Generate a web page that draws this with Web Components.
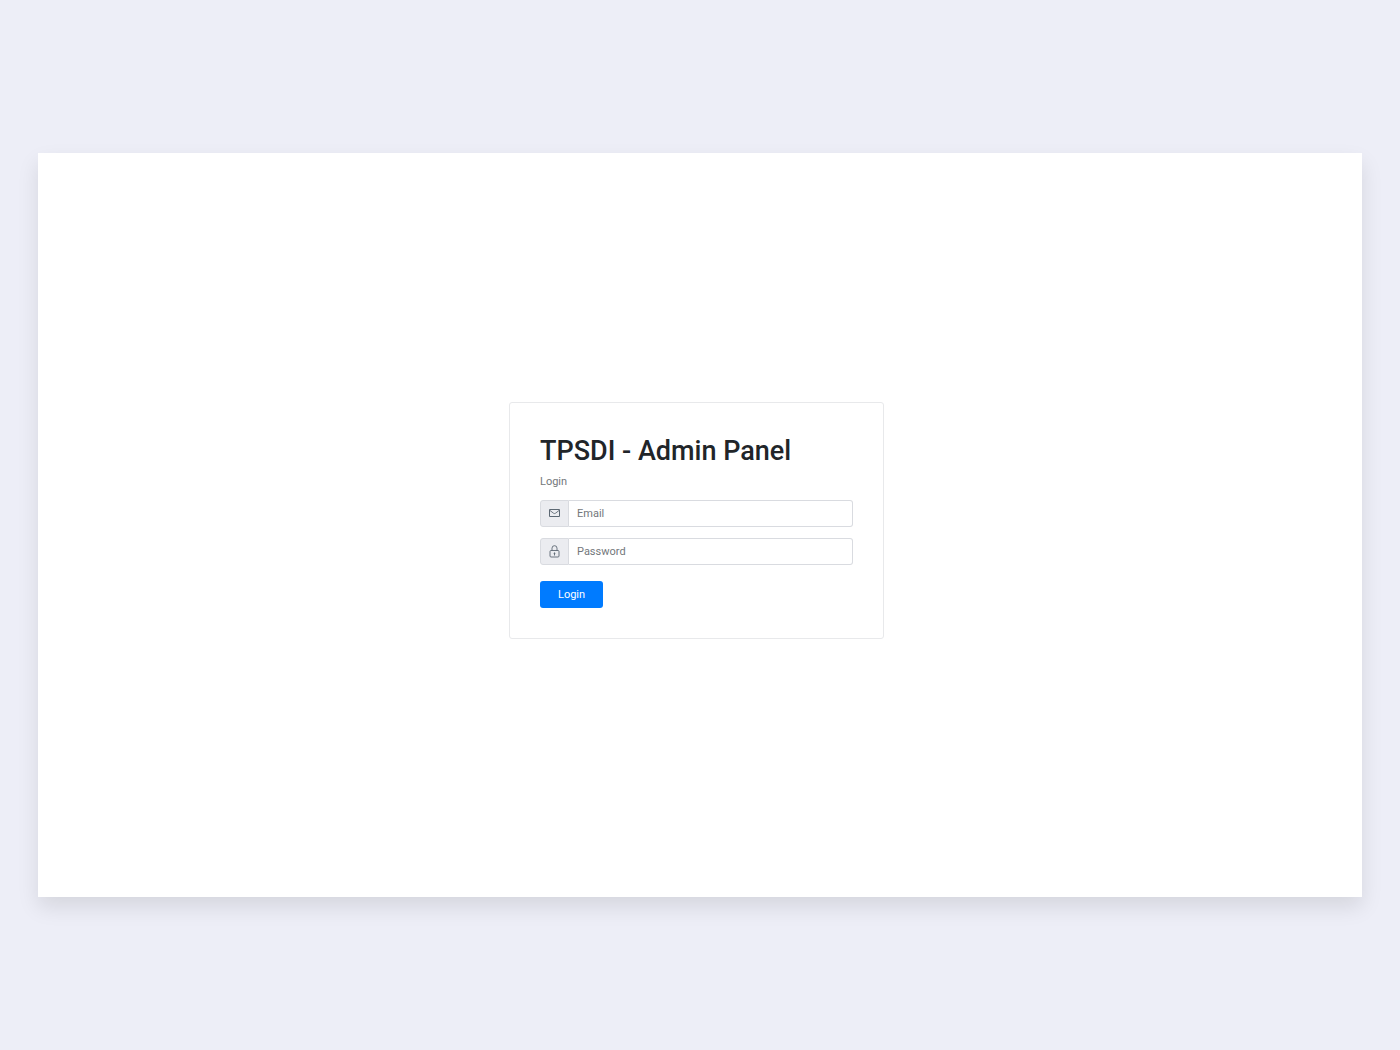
<!DOCTYPE html>
<html lang="en">
<head>
<meta charset="utf-8">
<meta name="viewport" content="width=device-width, initial-scale=1">
<title>TPSDI - Admin Panel</title>
<style>
  html, body { height: 100%; }
  body { margin: 0; background: #edeef7; font-family: Roboto, "Liberation Sans", sans-serif; font-size: 11px; line-height: 17px; color: #212529; }
</style>
</head>
<body>
<app-stage>
  <login-card heading="TPSDI - Admin Panel" subtitle="Login">
    <icon-field type="email" label="Email">
      <svg slot="icon" width="13" height="13" viewBox="0 0 13 13" fill="none" stroke="currentColor" aria-hidden="true"><path d="M1.500 2.500h10v7h-10z"/><path d="M2 3.500l3.500 2.700q1 .7 2 0L11 3.500" stroke-width=".9"/></svg>
    </icon-field>
    <icon-field type="password" label="Password">
      <svg slot="icon" width="13" height="13" viewBox="0 0 13 13" fill="none" stroke="currentColor" stroke-width=".9" aria-hidden="true"><rect x="2" y="5.500" width="9" height="6.500" rx="1"/><path d="M4 5.500V3.200a2.500 2.500 0 0 1 5 0v2.300M6.500 8.500v2"/><circle cx="6.500" cy="8.300" r=".5" fill="currentColor"/></svg>
    </icon-field>
    <primary-button slot="action">Login</primary-button>
  </login-card>
</app-stage>
<script>
const define = (name, markup, setup) => customElements.define(name, class extends HTMLElement {
  constructor() {
    super();
    this.attachShadow({ mode: 'open' }).innerHTML = markup;
  }
  connectedCallback() { if (setup) setup(this, this.shadowRoot); }
});

define('app-stage', `
  <style>
    :host { display: flex; box-sizing: border-box; min-height: 100vh; padding: 0 38px; align-items: center; }
    main { flex: 1; display: flex; box-sizing: border-box; aspect-ratio: 16 / 9; padding: 0 7px 10px 0; align-items: center; justify-content: center; background: #fff; box-shadow: 0 10px 20px rgba(0, 0, 0, .1); }
  </style>
  <main><slot></slot></main>`);

define('login-card', `
  <style>
    :host { display: block; box-sizing: border-box; width: 375px; max-width: 100%; padding: 30px; border: 1px solid #e8e9eb; border-radius: 3px; }
    h1 { margin: 0 0 4px; font-size: 27px; line-height: 36px; font-weight: 500; white-space: nowrap; }
    p { margin: 0 0 10px; color: #73777b; }
    .fields { display: flex; flex-direction: column; gap: 11px; margin-bottom: 16px; }
  </style>
  <form>
    <h1></h1>
    <p></p>
    <div class="fields"><slot></slot></div>
    <slot name="action"></slot>
  </form>`, (el, root) => {
  root.querySelector('h1').textContent = el.getAttribute('heading');
  root.querySelector('p').textContent = el.getAttribute('subtitle');
});

define('icon-field', `
  <style>
    :host { display: flex; height: 27px; }
    label { display: flex; box-sizing: border-box; width: 29px; align-items: center; justify-content: center; color: #5c6873; background: #ebecf0; border: 1px solid #d9dbe0; border-radius: 3px 0 0 3px; }
    input { flex: 1; min-width: 0; box-sizing: border-box; margin: 0; padding: 0 8px; border: 1px solid #d9dbe0; border-left: 0; border-radius: 0 3px 3px 0; background: #fff; color: #495057; font: inherit; outline: 0; }
    input::placeholder { color: #73777b; opacity: 1; }
    input:focus { border-color: #80bdff; }
  </style>
  <label for="control"><slot name="icon"></slot></label>
  <input id="control">`, (el, root) => {
  const input = root.querySelector('input');
  input.type = el.getAttribute('type');
  input.placeholder = el.getAttribute('label');
  input.setAttribute('aria-label', el.getAttribute('label'));
});

define('primary-button', `
  <style>
    :host { display: flex; }
    button { height: 27px; margin: 0; padding: 0 18px; border: 0; border-radius: 3px; background: #007bff; color: #fff; font: inherit; cursor: pointer; }
    button:hover { background: #0069d9; }
  </style>
  <button type="button"><slot></slot></button>`);
</script>
</body>
</html>
